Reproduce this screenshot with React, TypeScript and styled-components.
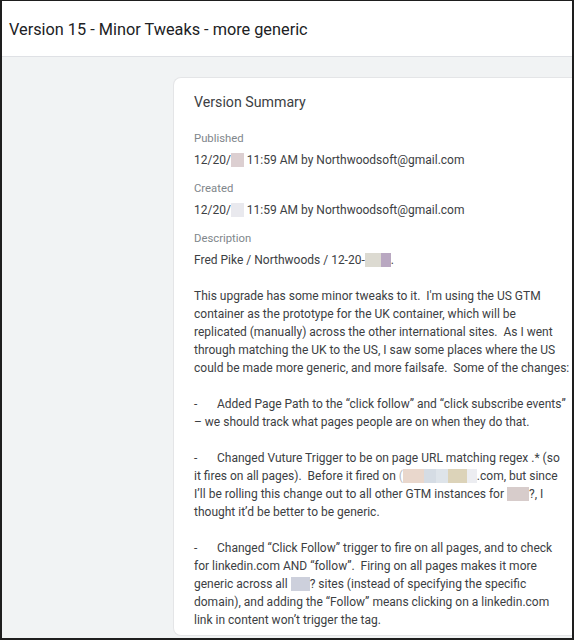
import React from "react";
import styled, { createGlobalStyle } from "styled-components";

const Global = createGlobalStyle`
  html, body { margin: 0; padding: 0; background: #ffffff; }
  body { font-family: Roboto, "Liberation Sans", Arial, sans-serif; }
`;

const Frame = styled.div`
  box-sizing: border-box;
  width: 574px;
  height: 640px;
  border-style: solid;
  border-color: #1e1e1e;
  border-width: 1px 2px 2px 2px;
  background: #f1f3f4;
  display: flex;
  flex-direction: column;
  overflow: hidden;
`;

const Header = styled.header`
  flex: none;
  height: 56px;
  background: #ffffff;
  border-bottom: 1px solid #dfe1e5;
  display: flex;
  align-items: center;
  padding: 2px 7px 0;
  box-sizing: border-box;
`;

const Title = styled.h1`
  margin: 0;
  font-family: Roboto, "Liberation Sans", Arial, sans-serif;
  font-weight: 400;
  font-size: 16.3px;
  color: #202124;
`;

const Body = styled.main`
  flex: 1;
  display: flex;
  padding: 20px 0 0 171px;
  min-height: 0;
`;

const Card = styled.section`
  flex: 1;
  background: #ffffff;
  border: 1px solid #e4e5e7;
  border-right: none;
  border-radius: 8px 0 0 8px;
  padding: 12px 0 6px 20px;
  align-self: flex-start;
`;

const CardTitle = styled.h2`
  margin: 0 0 17px;
  font-weight: 400;
  font-size: 14.2px;
  line-height: 24px;
  color: #3c4043;
`;

const Label = styled.div`
  font-size: 11.3px;
  line-height: 16px;
  color: #80868b;
  margin-bottom: 4px;
`;

const Value = styled.div`
  font-size: 12px;
  line-height: 18px;
  color: #3c4043;
  margin-bottom: 12px;
  white-space: pre;
`;

const Lines = styled.div`
  font-size: 12px;
  line-height: 18px;
  color: #3c4043;
`;

const Line = styled.div`
  white-space: pre;
  height: 18px;
`;

const Dash = styled.span`
  display: inline-block;
  width: 23px;
`;

const Faint = styled.span`
  color: #b8b8b8;
`;

const Redact = styled.span<{ $c: string; $w: number }>`
  display: inline-block;
  width: ${(p) => p.$w}px;
  height: 14px;
  vertical-align: -3px;
  background: ${(p) => p.$c};
`;

const R = ({ c, w }: { c: string; w: number }) => <Redact $c={c} $w={w} />;

export default function App() {
  return (
    <>
      <Global />
      <Frame>
        <Header>
          <Title>Version 15 - Minor Tweaks - more generic</Title>
        </Header>
        <Body>
          <Card>
            <CardTitle>Version Summary</CardTitle>
            <Label>Published</Label>
            <Value>
              12/20/
              <R c="#dccfd1" w={13} /> 11:59 AM by Northwoodsoft@gmail.com
            </Value>
            <Label>Created</Label>
            <Value>
              12/20/
              <R c="#e9e9ee" w={13} /> 11:59 AM by Northwoodsoft@gmail.com
            </Value>
            <Label>Description</Label>
            <Lines>
              <Line>
                Fred Pike / Northwoods / 12-20-
                <R c="#dcdad1" w={16} />
                <R c="#b9a8c1" w={10} />.
              </Line>
              <Line />
              <Line>This upgrade has some minor tweaks to it.  I'm using the US GTM</Line>
              <Line>container as the prototype for the UK container, which will be</Line>
              <Line>replicated (manually) across the other international sites.  As I went</Line>
              <Line>through matching the UK to the US, I saw some places where the US</Line>
              <Line>could be made more generic, and more failsafe.  Some of the changes:</Line>
              <Line />
              <Line>
                <Dash>-</Dash>Added Page Path to the “click follow” and “click subscribe events”
              </Line>
              <Line>– we should track what pages people are on when they do that.</Line>
              <Line />
              <Line>
                <Dash>-</Dash>Changed Vuture Trigger to be on page URL matching regex .* (so
              </Line>
              <Line>
                it fires on all pages).  Before it fired on <Faint>(</Faint>
                <R c="#e9d7cc" w={21} />
                <R c="#d5dce4" w={12} />
                <R c="#dee4ea" w={12} />
                <R c="#dcd3b9" w={19} />
                <R c="#ecedf1" w={10} />
                .com, but since
              </Line>
              <Line>
                I’ll be rolling this change out to all other GTM instances for <R c="#d7cccb" w={22} />?, I
              </Line>
              <Line>thought it’d be better to be generic.</Line>
              <Line />
              <Line>
                <Dash>-</Dash>Changed “Click Follow” trigger to fire on all pages, and to check
              </Line>
              <Line>for linkedin.com AND “follow”.  Firing on all pages makes it more</Line>
              <Line>
                generic across all <R c="#cdd0dc" w={19} />? sites (instead of specifying the specific
              </Line>
              <Line>domain), and adding the “Follow” means clicking on a linkedin.com</Line>
              <Line>link in content won’t trigger the tag.</Line>
            </Lines>
          </Card>
        </Body>
      </Frame>
    </>
  );
}
